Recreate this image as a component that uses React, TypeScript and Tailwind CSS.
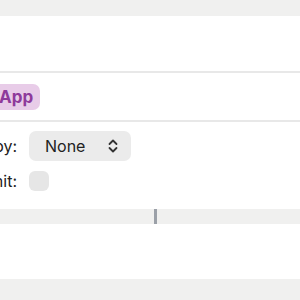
import React from "react";

export default function App() {
  const font = { fontFamily: '"Inter", "Liberation Sans", sans-serif' };
  return (
    <div className="w-[300px] h-[300px] overflow-hidden bg-white flex flex-col" style={font}>
      <div className="h-[16px] bg-[#f0f0ef] shrink-0" />
      <div className="h-[55px] shrink-0" />
      <div className="h-[2px] bg-[#e8e8e8] shrink-0" />
      <div className="h-[47px] shrink-0 flex items-center">
        <span className="-ml-[8px] h-[26px] pl-[7px] pr-[7px] rounded-[7px] bg-[#e8cce8] text-[#8e3a9b] font-bold text-[17px] leading-[26px]">
          App
        </span>
      </div>
      <div className="h-[2px] bg-[#e8e8e8] shrink-0" />
      <div className="shrink-0 pt-[9px] flex flex-col gap-[10px] -ml-[83px]">
        <div className="flex items-center gap-[12px] h-[30px]">
          <span className="w-[100px] text-right text-[16px] text-[#222]">Sort by:</span>
          <div className="w-[102px] h-[30px] rounded-[7px] bg-[#ebebeb] flex items-center justify-between pl-[16px] pr-[12px]">
            <span className="text-[16px] text-[#222]">None</span>
            <svg width="12" height="14" viewBox="0 0 12 14" fill="none" stroke="#333" strokeWidth="1.8" strokeLinecap="round" strokeLinejoin="round">
              <path d="M2.5 5 L6 1.5 L9.5 5" />
              <path d="M2.5 9 L6 12.5 L9.5 9" />
            </svg>
          </div>
        </div>
        <div className="flex items-center gap-[12px] h-[20px]">
          <span className="w-[100px] text-right text-[16px] text-[#222]">Limit:</span>
          <div className="w-[20px] h-[20px] rounded-[6px] bg-[#e6e6e6]" />
        </div>
      </div>
      <div className="h-[18px] shrink-0" />
      <div className="h-[15px] bg-[#f0f0ef] shrink-0 flex justify-center">
        <div className="w-[3px] h-full bg-[#9ba0a8] ml-[10px]" />
      </div>
      <div className="h-[55px] shrink-0" />
      <div className="flex-1 bg-[#f0f0ef]" />
    </div>
  );
}
